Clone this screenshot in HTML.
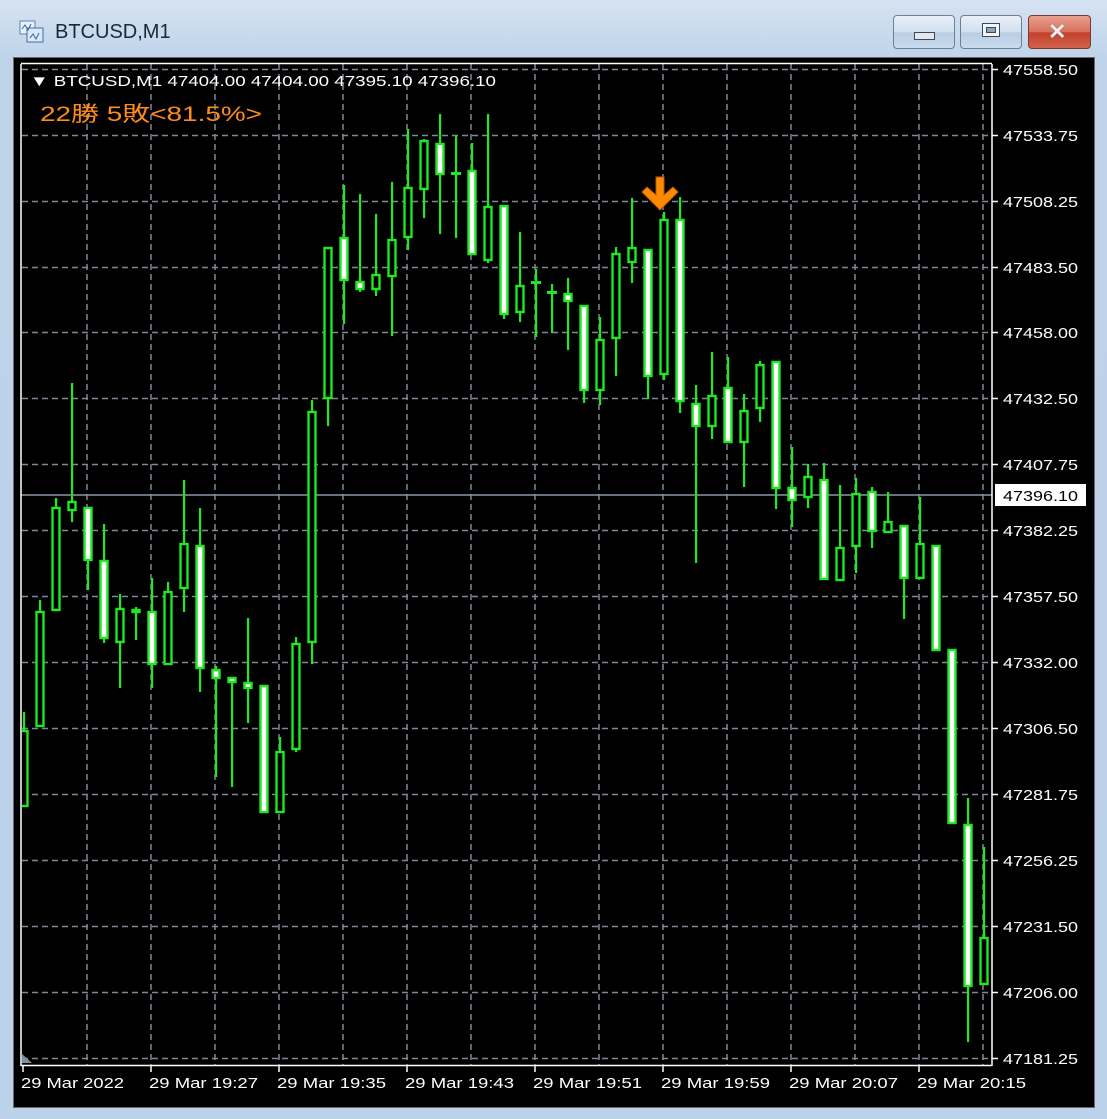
<!DOCTYPE html>
<html><head><meta charset="utf-8"><style>
html,body{margin:0;padding:0;width:1107px;height:1119px;overflow:hidden;background:#c3d7ed;font-family:"Liberation Sans","Noto Sans CJK JP",sans-serif}
.win{position:absolute;left:0;top:0;width:1107px;height:1119px;background:linear-gradient(#d6e3f2,#bed3ea 60px,#bcd2ea)}
.title{position:absolute;left:55px;top:21px;font-size:20px;color:#1b2838}
.btn{position:absolute;top:15px;height:32px;border:1px solid #6d7f96;border-radius:4px;background:linear-gradient(#e9f0f8,#d2e0ef 50%,#b9cde3 52%,#cadbee)}
.close{background:linear-gradient(#e9a08f,#d8705c 50%,#c2402b 52%,#d2634c);border-color:#7a3a33}
.panel{position:absolute;left:13px;top:57px;width:1082px;height:1051px;background:#000;border:1px solid #6a6a6a;box-sizing:border-box}
svg{position:absolute;left:0;top:0}
</style></head><body>
<div class="win">
 <svg width="30" height="30" style="left:18px;top:18px">
  <rect x="2" y="3" width="15" height="13" fill="#e8f0fa" stroke="#5b84b8"/>
  <rect x="9" y="10" width="16" height="14" fill="#dce8f6" stroke="#3d6eaa"/>
  <polyline points="4,11 7,7 10,12 13,6" fill="none" stroke="#2c63a8" stroke-width="1"/>
  <polyline points="12,20 15,16 18,21 21,15" fill="none" stroke="#2c63a8" stroke-width="1"/>
 </svg>
 <div class="title">BTCUSD,M1</div>
 <div class="btn" style="left:893px;width:60px"><div style="position:absolute;left:20px;top:16px;width:19px;height:6px;background:#e4e8ee;border:1px solid #3a4a5c"></div></div>
 <div class="btn" style="left:960px;width:60px"><div style="position:absolute;left:21px;top:7px;width:16px;height:12px;background:#f4f6f8;border:1px solid #3a4a5c"><div style="margin:3px;height:4px;border:1px solid #3a4a5c;background:#8ea4bd"></div></div></div>
 <div class="btn close" style="left:1028px;width:61px"><div style="position:absolute;left:19px;top:3px;font:bold 22px 'Liberation Sans',sans-serif;color:#eeeeee;text-shadow:0 0 1px #555">✕</div></div>
 <div class="panel"></div>
 <svg id="c" width="1107" height="1119" font-family="Liberation Sans, Noto Sans CJK JP, sans-serif">
  <g id="grid"></g>
  <line x1="21" y1="495" x2="992" y2="495" stroke="#8c97a6" stroke-width="1.5"/>
  <g id="cand"></g>
  <line x1="21" y1="63.5" x2="992" y2="63.5" stroke="#fff" stroke-width="1.5"/>
  <line x1="21" y1="64" x2="21" y2="1066" stroke="#fff" stroke-width="1.5"/>
  <line x1="992" y1="64" x2="992" y2="1066" stroke="#fff" stroke-width="1.5"/>
  <line x1="21" y1="1065.5" x2="992" y2="1065.5" stroke="#fff" stroke-width="1.5"/>
  <polygon points="22,1054 22,1063 32,1063" fill="#7f8ea0"/>
  <g id="ticks" stroke="#fff" stroke-width="1.5"></g>
  <path d="M656 177h8v18l9-8 5 5-18 18-18-18 5-5 9 8z" fill="#ff8a00" stroke="#b85a00" stroke-width="1"/>
  <text x="30" y="86" font-size="15" fill="#fff" textLength="466" lengthAdjust="spacingAndGlyphs">▼ BTCUSD,M1  47404.00 47404.00 47395.10 47396.10</text>
  <text x="40" y="121" font-size="21" fill="#ff8c1a" textLength="222" lengthAdjust="spacingAndGlyphs">22勝 5敗&lt;81.5%&gt;</text>
  <g font-size="15" fill="#fff">
   <text x="1003" y="75" textLength="75" lengthAdjust="spacingAndGlyphs">47558.50</text>
   <text x="1003" y="141" textLength="75" lengthAdjust="spacingAndGlyphs">47533.75</text>
   <text x="1003" y="207" textLength="75" lengthAdjust="spacingAndGlyphs">47508.25</text>
   <text x="1003" y="273" textLength="75" lengthAdjust="spacingAndGlyphs">47483.50</text>
   <text x="1003" y="338" textLength="75" lengthAdjust="spacingAndGlyphs">47458.00</text>
   <text x="1003" y="404" textLength="75" lengthAdjust="spacingAndGlyphs">47432.50</text>
   <text x="1003" y="470" textLength="75" lengthAdjust="spacingAndGlyphs">47407.75</text>
   <text x="1003" y="536" textLength="75" lengthAdjust="spacingAndGlyphs">47382.25</text>
   <text x="1003" y="602" textLength="75" lengthAdjust="spacingAndGlyphs">47357.50</text>
   <text x="1003" y="668" textLength="75" lengthAdjust="spacingAndGlyphs">47332.00</text>
   <text x="1003" y="734" textLength="75" lengthAdjust="spacingAndGlyphs">47306.50</text>
   <text x="1003" y="800" textLength="75" lengthAdjust="spacingAndGlyphs">47281.75</text>
   <text x="1003" y="866" textLength="75" lengthAdjust="spacingAndGlyphs">47256.25</text>
   <text x="1003" y="932" textLength="75" lengthAdjust="spacingAndGlyphs">47231.50</text>
   <text x="1003" y="998" textLength="75" lengthAdjust="spacingAndGlyphs">47206.00</text>
   <text x="1003" y="1064" textLength="75" lengthAdjust="spacingAndGlyphs">47181.25</text>
  </g>
  <rect x="995" y="484" width="91" height="22" fill="#fff"/>
  <text x="1003" y="501" font-size="15" fill="#000" textLength="75" lengthAdjust="spacingAndGlyphs">47396.10</text>
  <g font-size="15" fill="#fff">
   <text x="21" y="1088" textLength="103" lengthAdjust="spacingAndGlyphs">29 Mar 2022</text>
   <text x="149" y="1088" textLength="109" lengthAdjust="spacingAndGlyphs">29 Mar 19:27</text>
   <text x="277" y="1088" textLength="109" lengthAdjust="spacingAndGlyphs">29 Mar 19:35</text>
   <text x="405" y="1088" textLength="109" lengthAdjust="spacingAndGlyphs">29 Mar 19:43</text>
   <text x="533" y="1088" textLength="109" lengthAdjust="spacingAndGlyphs">29 Mar 19:51</text>
   <text x="661" y="1088" textLength="109" lengthAdjust="spacingAndGlyphs">29 Mar 19:59</text>
   <text x="789" y="1088" textLength="109" lengthAdjust="spacingAndGlyphs">29 Mar 20:07</text>
   <text x="917" y="1088" textLength="109" lengthAdjust="spacingAndGlyphs">29 Mar 20:15</text>
  </g>
 </svg>
</div>
<script>
var NS="http://www.w3.org/2000/svg";
function el(p,t,a){var e=document.createElementNS(NS,t);for(var k in a)e.setAttribute(k,a[k]);p.appendChild(e);return e;}
var g=document.getElementById("grid"),tk=document.getElementById("ticks"),cd=document.getElementById("cand");
var ys=[69,135,201,267,332,398,464,530,596,662,728,794,860,926,992,1058];
ys.forEach(function(y){el(g,"line",{x1:22,y1:y+.5,x2:991,y2:y+.5,stroke:"#7f8896","stroke-width":1.5,"stroke-dasharray":"6 4"});el(tk,"line",{x1:992,y1:y+.5,x2:998,y2:y+.5});});
for(var x=87;x<=983;x+=64){el(g,"line",{x1:x,y1:64,x2:x,y2:1065,stroke:"#7f8896","stroke-width":1.5,"stroke-dasharray":"6 4"});}
for(var x=23;x<=919;x+=128){el(tk,"line",{x1:x,y1:1066,x2:x,y2:1072});}
var D=[[712,730,807,807,0],[600,611,727,727,0],[498,507,611,611,0],[383,501,511,522,0],[507,507,561,590,1],[524,560,639,643,1],[594,608,643,688,0],[607,609,613,640,1],[578,611,665,688,1],[582,591,665,665,0],[480,543,589,612,0],[508,545,669,692,1],[666,669,679,777,1],[677,677,683,787,1],[618,682,689,723,1],[685,685,813,813,1],[737,751,813,813,0],[637,643,750,752,0],[400,411,643,664,0],[247,247,399,426,0],[185,237,281,324,1],[194,281,290,292,1],[214,274,290,296,0],[182,239,277,336,0],[129,187,238,250,0],[139,140,190,218,0],[114,143,175,234,1],[136,173,175,238,2],[143,170,255,255,1],[114,206,261,263,0],[205,205,315,319,1],[232,285,313,322,0],[269,282,284,337,2],[284,292,294,333,2],[278,293,302,350,1],[305,305,391,403,1],[317,339,391,405,0],[247,253,339,376,0],[198,247,263,283,0],[249,249,377,399,1],[212,219,375,380,0],[197,219,402,413,1],[385,403,427,563,1],[352,395,427,439,0],[357,387,443,443,1],[394,410,443,487,0],[361,364,409,422,0],[361,361,489,509,1],[447,487,501,527,1],[464,476,498,508,0],[463,479,580,580,1],[485,547,581,581,0],[478,493,547,573,0],[487,491,532,548,1],[492,521,533,533,0],[525,525,579,619,1],[497,543,579,579,0],[545,545,651,651,1],[649,649,824,824,1],[798,824,987,1042,1],[847,937,985,985,0]];
var G="#1ee81e";
el(cd,"clipPath",{id:"cp"});
var cp=cd.lastChild;el(cp,"rect",{x:22,y:60,width:970,height:1005});
var gg=el(cd,"g",{"clip-path":"url(#cp)"});
D.forEach(function(d,i){var cx=24+16*i;
 el(gg,"rect",{x:cx-1,y:d[0],width:2.2,height:Math.max(1,d[3]-d[0]),fill:G});
 if(d[4]==2){el(gg,"rect",{x:cx-5,y:d[1]-1,width:10,height:3,fill:G});return;}
 var h=Math.max(2,d[2]-d[1]);
 el(gg,"rect",{x:cx-3.5,y:d[1]+1,width:7,height:h-2<1?1:h-2,fill:d[4]==1?"#fff":"#000",stroke:G,"stroke-width":2.4});
});
</script>
</body></html>
